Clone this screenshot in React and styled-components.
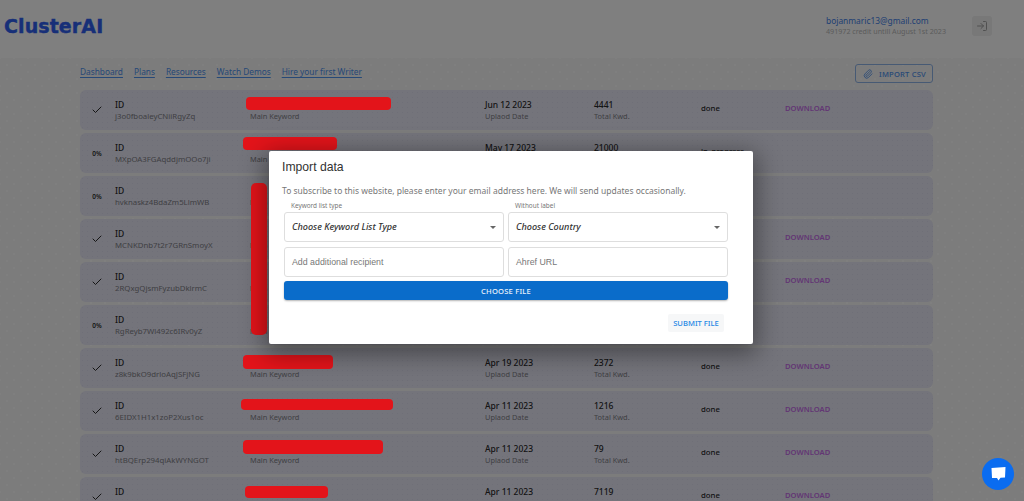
import React from "react";
import styled, { createGlobalStyle } from "styled-components";
import { Check, LogIn, Paperclip } from "lucide-react";

const Global = createGlobalStyle`
  html, body { margin: 0; padding: 0; height: 100%; overflow: hidden; }
  body { font-family: "Noto Sans", "Open Sans", sans-serif; }
  * { box-sizing: border-box; }
`;

const Page = styled.div`
  position: relative;
  width: 1024px;
  height: 501px;
  overflow: hidden;
  background-color: #fdfdfd;
`;
const Dotted = styled.main`
  height: 443px;
  padding: 4px 91px 0 80px;
  background-color: #f8f8f8;
  background-image:
    radial-gradient(circle, #ffffff 0.7px, transparent 1px),
    radial-gradient(circle, #ffffff 0.7px, transparent 1px);
  background-size: 14px 14px;
  background-position: 0 0, 7px 7px;
`;
const Header = styled.header`
  height: 58px;
  background: #ffffff;
  display: flex;
  align-items: center;
  padding: 0 32px 6px 4px;
`;
const Logo = styled.div`
  font-family: "DejaVu Sans", sans-serif;
  font-weight: 700;
  font-size: 19px;
  letter-spacing: 0.1px;
  color: #2f5ff0;
  -webkit-text-stroke: 0.4px #2f5ff0;
  flex: 1;
`;
const Account = styled.div`
  width: 146px;
  margin-bottom: 1px;
`;
const Email = styled.div`
  font-size: 8.4px;
  line-height: 11px;
  color: #3f7ee8;
  white-space: nowrap;
`;
const Credit = styled.div`
  font-size: 7.15px;
  line-height: 10px;
  color: #b8b8b8;
  white-space: nowrap;
`;
const LogoutButton = styled.button`
  width: 20px;
  height: 20px;
  padding: 0;
  border: 0;
  border-radius: 3px;
  background: #f0f0f0;
  color: #a0a0a0;
  display: flex;
  align-items: center;
  justify-content: center;
`;
const Nav = styled.nav`
  height: 28px;
  display: flex;
  align-items: flex-start;
  justify-content: space-between;
`;
const Links = styled.div`
  display: flex;
  gap: 11px;
  padding-top: 4px;
`;
const NavLink = styled.a`
  font-size: 8.3px;
  line-height: 12px;
  color: #4f92ee;
  text-decoration: underline;
  text-underline-offset: 1.5px;
  white-space: nowrap;
`;
const ImportButton = styled.button`
  width: 78px;
  height: 19px;
  margin-top: 2px;
  padding: 0 0 0 7px;
  display: flex;
  align-items: center;
  gap: 6px;
  background: transparent;
  border: 1px solid #8fb4e8;
  border-radius: 3px;
  color: #4f92ee;
  font-family: inherit;
  font-size: 7.6px;
  font-weight: 500;
  letter-spacing: 0.2px;
  white-space: nowrap;
`;
const Rows = styled.div`
  display: flex;
  flex-direction: column;
  gap: 3px;
`;
const Row = styled.div`
  position: relative;
  flex: none;
  height: 40px;
  border-radius: 6px;
  background-color: #e8e8f7;
  background-image: radial-gradient(circle, #dfdff0 0.6px, transparent 1px);
  background-size: 5px 5px;
  display: grid;
  grid-template-columns: 35px 135px 235px 109px 107px 84px 1fr;
  align-items: center;
`;
const Status = styled.div`
  display: flex;
  justify-content: center;
  padding-right: 1px;
  color: #2a2a2a;
  font-size: 6.5px;
  font-weight: 600;
`;
const Cell = styled.div`
  white-space: nowrap;
  padding-top: 1px;
`;
const Value = styled.div`
  font-size: 8.5px;
  line-height: 12px;
  font-weight: 500;
  color: #2a2a2a;
`;
const Sub = styled.div`
  font-size: 7.4px;
  line-height: 11px;
  color: #808086;
`;
const IdText = styled(Sub)`
  font-size: 7.8px;
`;
const StateText = styled.div`
  padding-bottom: 4px;
  font-size: 7.8px;
  color: #2a2a2a;
  font-weight: 500;
  white-space: nowrap;
`;
const Download = styled.a`
  padding-bottom: 4px;
  font-size: 7.6px;
  font-weight: 600;
  color: #c66ee8;
  white-space: nowrap;
`;
const Redaction = styled.span`
  position: absolute;
  z-index: 1;
  top: ${(p) => p.$top}px;
  left: ${(p) => p.$left}px;
  width: ${(p) => p.$width}px;
  height: ${(p) => p.$height}px;
  border-radius: 4px;
  background: #e3141a;
`;
const TallRedaction = styled.span`
  position: absolute;
  z-index: 1;
  left: 251px;
  top: 183px;
  width: 16px;
  height: 152px;
  border-radius: 5px;
  background: #e3141a;
`;
const Overlay = styled.div`
  position: absolute;
  inset: 0;
  background: rgba(0, 0, 0, 0.5);
`;
const Modal = styled.section`
  position: absolute;
  z-index: 2;
  left: 269px;
  top: 151px;
  width: 484px;
  height: 193px;
  background: #fff;
  border-radius: 2px;
  padding: 9px 13px 0;
  box-shadow: 0 6px 24px 4px rgba(0, 0, 0, 0.4);
`;
const Title = styled.h2`
  margin: 0;
  font-family: "Liberation Sans", sans-serif;
  font-weight: 400;
  font-size: 12.2px;
  line-height: 15px;
  color: #333;
`;
const Help = styled.p`
  margin: 10px 0 0;
  font-size: 8.5px;
  line-height: 12px;
  color: #777;
  white-space: nowrap;
`;
const FormGrid = styled.div`
  margin: 4px 0 0 2px;
  width: 444px;
  display: grid;
  grid-template-columns: 220px 220px;
  column-gap: 4px;
`;
const Field = styled.div`
  height: 30px;
  margin-bottom: 5px;
  border: 1px solid #dedede;
  border-radius: 3px;
  display: flex;
  align-items: center;
  padding: 0 7px;
`;
const Legend = styled.label`
  font-size: 6.4px;
  line-height: 10px;
  color: #777;
  padding-left: 7px;
  display: block;
  margin-bottom: 1px;
`;
const SelectText = styled.span`
  flex: 1;
  padding-bottom: 2px;
  font-size: 9.1px;
  font-style: italic;
  font-weight: 500;
  color: #333;
`;
const Caret = styled.span`
  width: 0;
  height: 0;
  border-left: 3px solid transparent;
  border-right: 3px solid transparent;
  border-top: 3px solid #666;
`;
const Placeholder = styled.span`
  font-family: "Liberation Sans", sans-serif;
  font-size: 8.8px;
  color: #777;
`;
const ChooseFile = styled.button`
  grid-column: 1 / -1;
  height: 19px;
  margin-top: -1px;
  border: 0;
  border-radius: 3px;
  background: #0a6cca;
  color: #e8f1fb;
  font-family: inherit;
  font-size: 7.6px;
  font-weight: 500;
  letter-spacing: 0.2px;
  box-shadow: 0 1px 2px rgba(0, 0, 0, 0.3);
`;
const Actions = styled.div`
  display: flex;
  justify-content: flex-end;
  margin: 14px 16px 0 0;
`;
const SubmitFile = styled.button`
  width: 56px;
  height: 18px;
  padding: 0;
  border: 0;
  border-radius: 2px;
  background: #f6f7f8;
  color: #1e88e5;
  font-family: inherit;
  font-size: 7.6px;
  font-weight: 500;
  white-space: nowrap;
`;
const Chat = styled.div`
  position: absolute;
  z-index: 3;
  left: 982px;
  top: 458px;
  width: 32px;
  height: 32px;
  border-radius: 50%;
  background: #0a6cf0;
  display: flex;
  align-items: center;
  justify-content: center;
`;

const rows = [
  { id: "j3o0fboaleyCNiiRgyZq", date: "Jun 12 2023", total: "4441", state: "done", done: true, dl: true, red: { left: 166, top: 7, width: 145, height: 13 } },
  { id: "MXpOA3FGAqddjmOOo7ji", date: "May 17 2023", total: "21000", state: "in_progress", done: false, dl: false, red: { left: 163, top: 4, width: 94, height: 13 } },
  { id: "hvknaskz4BdaZm5LlmWB", date: "May 12 2023", total: "3120", state: "in_progress", done: false, dl: false },
  { id: "MCNKDnb7t2r7GRnSmoyX", date: "May 9 2023", total: "1840", state: "done", done: true, dl: true },
  { id: "2RQxgQjsmFyzubDklrmC", date: "May 2 2023", total: "960", state: "done", done: true, dl: true },
  { id: "RgReyb7Wl492c6IRv0yZ", date: "Apr 27 2023", total: "5012", state: "in_progress", done: false, dl: false },
  { id: "z8k9bkO9drloAqJSFjNG", date: "Apr 19 2023", total: "2372", state: "done", done: true, dl: true, red: { left: 163, top: 7, width: 90, height: 14 } },
  { id: "6EIDX1H1x1zoP2Xus1oc", date: "Apr 11 2023", total: "1216", state: "done", done: true, dl: true, red: { left: 161, top: 8, width: 152, height: 11 } },
  { id: "htBQErp294qiAkWYNGOT", date: "Apr 11 2023", total: "79", state: "done", done: true, dl: true, red: { left: 163, top: 6, width: 140, height: 14 } },
  { id: "kc59b1AcmmRG3PR4IUXl", date: "Apr 11 2023", total: "7119", state: "done", done: true, dl: true, red: { left: 165, top: 9, width: 83, height: 12 } },
];

const navItems = ["Dashboard", "Plans", "Resources", "Watch Demos", "Hire your first Writer"];

export default function App() {
  return (
    <Page>
      <Global />
      <Header>
        <Logo>ClusterAI</Logo>
        <Account>
          <Email>bojanmaric13@gmail.com</Email>
          <Credit>491972 credit untill August 1st 2023</Credit>
        </Account>
        <LogoutButton aria-label="Log out">
          <LogIn size={12} strokeWidth={2} />
        </LogoutButton>
      </Header>
      <Dotted>
        <Nav>
          <Links>
            {navItems.map((n) => (
              <NavLink key={n}>{n}</NavLink>
            ))}
          </Links>
          <ImportButton>
            <Paperclip size={10} strokeWidth={2} />
            IMPORT CSV
          </ImportButton>
        </Nav>
        <Rows>
          {rows.map((r) => (
            <Row key={r.id}>
              <Status>{r.done ? <Check size={12} strokeWidth={2} /> : "0%"}</Status>
              <Cell>
                <Value>ID</Value>
                <IdText>{r.id}</IdText>
              </Cell>
              <Cell>
                <Value>&nbsp;</Value>
                <Sub>Main Keyword</Sub>
              </Cell>
              <Cell>
                <Value>{r.date}</Value>
                <Sub>Uplaod Date</Sub>
              </Cell>
              <Cell>
                <Value>{r.total}</Value>
                <Sub>Total Kwd.</Sub>
              </Cell>
              <StateText>{r.state}</StateText>
              {r.dl ? <Download>DOWNLOAD</Download> : <span />}
              {r.red && <Redaction $left={r.red.left} $top={r.red.top} $width={r.red.width} $height={r.red.height} />}
            </Row>
          ))}
        </Rows>
      </Dotted>
      <Overlay />
      <TallRedaction />
      <Modal>
        <Title>Import data</Title>
        <Help>To subscribe to this website, please enter your email address here. We will send updates occasionally.</Help>
        <FormGrid>
          <Legend>Keyword list type</Legend>
          <Legend>Without label</Legend>
          <Field>
            <SelectText>Choose Keyword List Type</SelectText>
            <Caret />
          </Field>
          <Field>
            <SelectText>Choose Country</SelectText>
            <Caret />
          </Field>
          <Field>
            <Placeholder>Add additional recipient</Placeholder>
          </Field>
          <Field>
            <Placeholder>Ahref URL</Placeholder>
          </Field>
          <ChooseFile>CHOOSE FILE</ChooseFile>
        </FormGrid>
        <Actions>
          <SubmitFile>SUBMIT FILE</SubmitFile>
        </Actions>
      </Modal>
      <Chat>
        <svg width="17" height="16" viewBox="0 0 17 16">
          <path d="M1.5 2 L15.5 1 L15 11.5 L10.5 11.8 L8.5 14.5 L7 12 L2 12 Z" fill="#fff" />
        </svg>
      </Chat>
    </Page>
  );
}
